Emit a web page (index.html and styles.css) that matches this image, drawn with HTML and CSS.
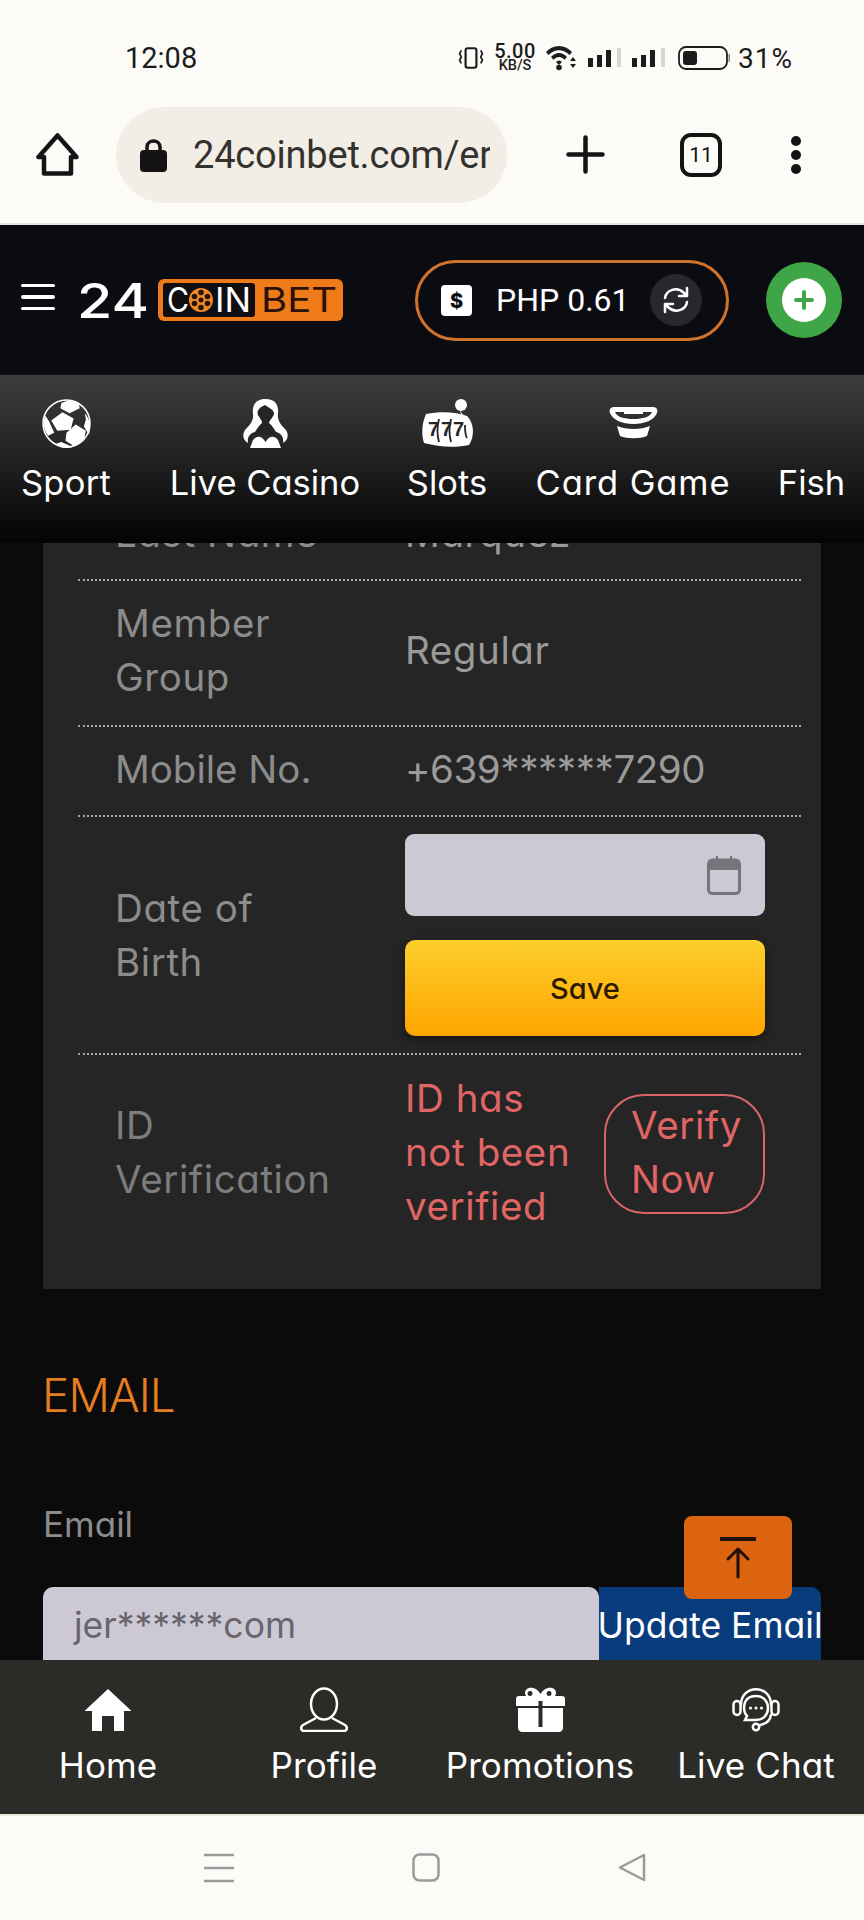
FILE: index.html
```html
<!DOCTYPE html>
<html lang="en">
<head>
<meta charset="utf-8">
<title>24 Coin Bet</title>
<link rel="stylesheet" href="styles.css">
</head>
<body>
<div class="phone">
  <div class="status">
    <span class="time">12:08</span>
    <div class="status-icons">
      <svg width="26" height="22" viewBox="0 0 24 20" fill="none" stroke="#1c1c1c" stroke-width="2"><rect x="7" y="1" width="10" height="18" rx="2"/><path d="M3 3 L1.500 6 L3 9 L1.500 12 L3 15 M21 3 L22.500 6 L21 9 L22.500 12 L21 15" stroke-width="1.600"/></svg>
      <div class="speed"><span class="speed-num">5.00</span><span class="speed-unit">KB/S</span></div>
      <svg width="31" height="26" viewBox="0 0 31 26" fill="#1c1c1c"><path d="M0 7 C7 -1 19 -1 26 7 L23.500 10 C17.500 3.500 8.500 3.500 2.500 10Z"/><path d="M5 12 C10 6.500 16 6.500 21 12 L18.500 14.800 C15 11 11 11 7.500 14.800Z"/><path d="M10 17 C12 15 14 15 16 17 L13 20Z"/><circle cx="13" cy="22.500" r="2.800"/><path d="M27 12 L30 16 H24Z M27 23 L30 19 H24Z"/></svg>
      <svg class="sig" width="38" height="20" viewBox="0 0 38 20"><path fill="#1c1c1c" d="M3 10 h5 v9 h-5z M12 7 h5 v12 h-5z M21 2 h5 v17 h-5z"/><path fill="#d6d6d4" d="M32 0 h4 v19 h-4z"/></svg>
      <svg class="sig" width="36" height="20" viewBox="0 0 36 20"><path fill="#1c1c1c" d="M1 10 h5 v9 h-5z M10 7 h5 v12 h-5z M19 2 h5 v17 h-5z"/><path fill="#d6d6d4" d="M30 0 h4 v19 h-4z"/></svg>
      <svg width="55" height="24" viewBox="0 0 55 24" fill="none"><rect x="4" y="1" width="48" height="22" rx="7" stroke="#1c1c1c" stroke-width="1.800"/><rect x="8" y="5" width="14" height="14" rx="3" fill="#1c1c1c"/><rect x="53.500" y="8" width="1.500" height="8" fill="#888"/></svg>
      <span class="batt-text">31%</span>
    </div>
  </div>

  <div class="toolbar">
    <svg class="tb-home" width="43" height="43" viewBox="0 0 43 43" fill="none" stroke="#141414" stroke-width="4.500" stroke-linejoin="round"><path d="M21.500 2.500 L2.500 24 H8 V40.500 H35 V24 H40.500Z"/></svg>
    <div class="url-pill">
      <svg width="27" height="34" viewBox="0 0 27 34"><path fill="none" stroke="#141414" stroke-width="3.500" d="M7 15 V9 C7 1 20 1 20 9 V15"/><rect x="0" y="12" width="27" height="22" rx="4" fill="#141414"/></svg>
      <span class="url-text">24coinbet.com/er</span>
    </div>
    <svg class="tb-plus" width="39" height="39" viewBox="0 0 39 39" stroke="#141414" stroke-width="4.500" stroke-linecap="round"><path d="M19.500 2.500 V36.500 M2.500 19.500 H36.500"/></svg>
    <div class="tabs">11</div>
    <div class="dots"><i></i><i></i><i></i></div>
  </div>

  <header class="site-head">
    <div class="burger"><i></i><i></i><i></i></div>
    <svg class="logo" width="266" height="42" viewBox="0 0 266 42" role="img" aria-label="24 Coin Bet">
      <g transform="translate(2 0)">
      <text class="logo-24" x="-2" y="39" textLength="72" lengthAdjust="spacingAndGlyphs">24</text>
      <rect x="79" y="0" width="185" height="42" rx="6" fill="#ef7a1a"/>
      <rect x="84" y="4" width="92" height="34" rx="3" fill="#0e0d10"/>
      <text class="logo-w" x="88" y="33" textLength="22" lengthAdjust="spacingAndGlyphs">C</text>
      <circle cx="122" cy="21" r="12" fill="#ef8a24"/>
      <g fill="#2a1208"><circle cx="122" cy="21" r="2.500"/><circle cx="122" cy="13.500" r="2.800"/><circle cx="122" cy="28.500" r="2.800"/><circle cx="115.500" cy="17.500" r="2.800"/><circle cx="128.500" cy="17.500" r="2.800"/><circle cx="115.500" cy="24.500" r="2.800"/><circle cx="128.500" cy="24.500" r="2.800"/></g>
      <text class="logo-w" x="136" y="33" textLength="36" lengthAdjust="spacingAndGlyphs">IN</text>
      <text class="logo-k" x="182" y="33" textLength="76" lengthAdjust="spacingAndGlyphs">BET</text>
      </g>
    </svg>
    <div class="balance">
      <svg width="31" height="31" viewBox="0 0 31 31"><rect width="31" height="31" rx="4" fill="#fff"/><text class="dollar" x="15.500" y="23" text-anchor="middle">$</text></svg>
      <span class="balance-text">PHP 0.61</span>
      <div class="refresh">
        <svg width="30" height="30" viewBox="0 0 30 30" fill="none" stroke="#fff" stroke-width="2.500" stroke-linecap="round" stroke-linejoin="round"><path d="M4 13 C5 5 16 1 23 8 L26 11 M26 3 V11 H18"/><path d="M26 17 C25 25 14 29 7 22 L4 19 M4 27 V19 H12"/></svg>
      </div>
    </div>
    <div class="add"><span class="add-in">
      <svg width="22" height="22" viewBox="0 0 22 22" stroke="#3fa648" stroke-width="4" stroke-linecap="round"><path d="M11 3 V19 M3 11 H19"/></svg>
    </span></div>
  </header>

  <nav class="cats">
    <a class="cat cat-first">
      <svg class="cat-icon" width="49" height="49" viewBox="0 0 48 48" fill="#fff"><circle cx="24" cy="24" r="23" fill="none" stroke="#fff" stroke-width="1.500"/><path d="M19 4 L27 1 L36 4 L37 9 L27 14 L18 9Z"/><path d="M20 13 L31 19 L28 30 L15 31 L9 21Z"/><path d="M33 25 L43 31 L41 41 L31 46 L23 41 L24 33Z"/><path d="M3 16 L7 22 L12 33 L6 36 C1 30 1 22 3 16Z"/><path d="M42 14 C47 20 48 27 46 35 L41 27 L43 20Z"/><path d="M13 44 L19 42 L30 47 C24 49 18 48 13 44Z"/></svg>
      <span>Sport</span>
    </a>
    <a class="cat cat-live">
      <svg class="cat-icon" width="45" height="49" viewBox="0 0 45 49" fill="#fff"><path d="M22.500 0 C12 0 9 7 10 15 C11 22 6 27 2 31 C-1 36 0 41 5 44 C4 38 7 34 12 33 L33 33 C38 34 41 38 40 44 C45 41 46 36 43 31 C39 27 34 22 35 15 C36 7 33 0 22.500 0Z"/><path fill="#252525" d="M22 6 C17 8 13 12 15 16 C17 20 19 21 19 24 C15 27 13 32 10 36 L35 36 C32 32 30 27 26 24 C27 20 31 18 31 14 C30 10 26 9 22 6Z"/><path d="M7 49 L10 41 C14 36 19 37 22.500 43 C26 37 31 36 35 41 L38 49Z"/></svg>
      <span>Live Casino</span>
    </a>
    <a class="cat cat-slots">
      <svg class="cat-icon" width="53" height="49" viewBox="0 0 53 49"><circle cx="40" cy="6" r="6" fill="#fff"/><path d="M38 10 L46 22 L43 22Z" fill="#fff"/><path d="M5 15 C20 12 36 13 46 17 C53 24 54 37 48 46 C34 49 18 48 3 44 C0 35 1 24 5 15Z" fill="#fff"/><text class="seven" x="7" y="37">7</text><text class="seven" x="20" y="37">7</text><text class="seven" x="32" y="37">7</text><path d="M18 20 C16 28 16 36 18 43 M30 20 C28 28 28 36 30 43 M44 26 C44 32 44 36 46 39" fill="none" stroke="#252525" stroke-width="1.800"/></svg>
      <span>Slots</span>
    </a>
    <a class="cat cat-card">
      <svg class="cat-icon" width="49" height="49" viewBox="0 0 49 49" fill="#fff"><path fill-rule="evenodd" d="M5 8 H44 C48 8 49 11 48 14 C45 21 36 25 24.500 25 C13 25 4 21 1 14 C0 11 1 8 5 8Z M6 13 C8 18 15 20 24.500 20 C34 20 41 18 43 13 H34 V15 H15 V13Z"/><path d="M8 27 C18 31 31 31 41 27 L38 37 C31 40 18 40 11 37Z"/></svg>
      <span>Card Game</span>
    </a>
    <a class="cat cat-fish"><span>Fish</span></a>
  </nav>

  <main class="content">
    <section class="card">
      <div class="row"><div class="label">Last Name</div><div class="value">Marquez</div></div>
      <div class="row row-tall"><div class="label">Member<br>Group</div><div class="value">Regular</div></div>
      <div class="row"><div class="label label-mobile">Mobile No.</div><div class="value value-num">+639******7290</div></div>
      <div class="row row-dob">
        <div class="label">Date of<br>Birth</div>
        <div class="value dob">
          <div class="date-field">
            <svg width="34" height="39" viewBox="0 0 34 39"><path fill="#6f6c74" d="M9 0 h2 v5 h-2z M23 0 h2 v5 h-2z"/><rect x="1.500" y="4" width="31" height="33.500" rx="4" fill="none" stroke="#77747c" stroke-width="3"/><path fill="#77747c" d="M2 5 h30 v9 h-30z"/></svg>
          </div>
          <button class="save">Save</button>
        </div>
      </div>
      <div class="row row-last">
        <div class="label label-dim">ID<br>Verification</div>
        <div class="value verify">
          <div class="verify-text">ID has<br>not been<br>verified</div>
          <div class="verify-btn">Verify<br>Now</div>
        </div>
      </div>
    </section>

    <h2 class="section-title">EMAIL</h2>
    <div class="field-label">Email</div>
    <div class="email-row">
      <div class="email-input">jer******com</div>
      <div class="email-btn">Update Email</div>
    </div>

    <button class="to-top" aria-label="Back to top">
      <svg width="36" height="42" viewBox="0 0 36 42" fill="none" stroke="#1e1208" stroke-linecap="round" stroke-linejoin="round"><path d="M1 2 H35" stroke-width="4"/><path d="M18 40 V12 M8 22 L18 12 L28 22" stroke-width="3"/></svg>
    </button>
  </main>

  <nav class="tabbar">
    <a class="tab">
      <svg width="48" height="45" viewBox="0 0 48 45" fill="#fff"><path d="M24 2 L47.500 24 H40 V44 H30 V29 H18 V44 H8 V24 H0.500Z"/></svg>
      <span>Home</span>
    </a>
    <a class="tab">
      <svg width="48" height="45" viewBox="0 0 48 45" fill="none" stroke="#fff" stroke-width="2.500" stroke-linejoin="round"><ellipse cx="24" cy="17" rx="13" ry="15.500"/><path d="M16 31 L3 38 C0 40 1 44 4 44 H44 C47 44 48 40 45 38 L32 31"/></svg>
      <span>Profile</span>
    </a>
    <a class="tab">
      <svg width="49" height="45" viewBox="0 0 49 45" fill="#fff"><path fill-rule="evenodd" d="M13 1 C18 0 22 3 24.500 7 C27 3 31 0 36 1 C40 2 41 6 39 9 H10 C8 6 9 2 13 1Z M14 4 a2.500 2.500 0 1 0 .1 0Z M33 4 a2.500 2.500 0 1 0 .1 0Z"/><path d="M3 9 H46 C48 9 49 10 49 12 V19 H0 V12 C0 10 1 9 3 9Z"/><path d="M2 21 H47 V41 C47 43 45 45 43 45 H6 C4 45 2 43 2 41Z"/><path fill="#2b2b27" d="M22.500 14 h4 v26 h-4z"/></svg>
      <span>Promotions</span>
    </a>
    <a class="tab">
      <svg width="48" height="45" viewBox="0 0 48 45" fill="none" stroke="#fff" stroke-width="2.500" stroke-linecap="round"><path d="M9 18 C9 -3 39 -3 39 18"/><rect x="1.500" y="14" width="7" height="14" rx="3.500"/><rect x="39.500" y="14" width="7" height="14" rx="3.500"/><path d="M24 9 C15 9 12 15 12 20 C12 24 13 27 15 29 L13 33 H24 C32 33 36 27 36 21 C36 15 32 9 24 9Z"/><path d="M39 28 C38 34 34 37 28 38"/><circle cx="24" cy="40" r="3.200"/><g fill="#fff" stroke="none"><circle cx="18.500" cy="21" r="1.500"/><circle cx="24" cy="21" r="1.500"/><circle cx="29.500" cy="21" r="1.500"/></g></svg>
      <span>Live Chat</span>
    </a>
  </nav>

  <div class="android-nav">
    <svg width="30" height="30" viewBox="0 0 30 30" stroke="#9b9b9b" stroke-width="2.500"><path d="M0 2 H30 M0 15 H30 M0 28 H30"/></svg>
    <svg width="28" height="29" viewBox="0 0 28 29" fill="none" stroke="#9b9b9b" stroke-width="2.500"><rect x="1.500" y="1.500" width="25" height="26" rx="6"/></svg>
    <svg width="28" height="29" viewBox="0 0 28 29" fill="none" stroke="#9b9b9b" stroke-width="2.500" stroke-linejoin="round"><path d="M26 2 V27 L2 14.500Z"/></svg>
  </div>
</div>
</body>
</html>
```
FILE: styles.css
```css
* { box-sizing: border-box; }
html, body { margin: 0; padding: 0; background: #0b0b0b; }
svg { display: block; flex: none; }

.phone {
  width: 864px;
  height: 1920px;
  display: flex;
  flex-direction: column;
  overflow: hidden;
  font-family: Inter, "Liberation Sans", sans-serif;
  font-feature-settings: "cv11" 1;
}

/* Android status bar */
.status {
  height: 90px;
  padding: 26px 71px 0 125px;
  background: #fdfbf8;
  display: flex;
  align-items: center;
  justify-content: space-between;
  font-family: Roboto, sans-serif;
  color: #1c1c1c;
}
.time { font-size: 29px; }
.status-icons { display: flex; align-items: center; gap: 8px; }
.speed { width: 46px; display: flex; flex-direction: column; align-items: center; }
.speed-num { font-size: 20px; font-weight: 500; letter-spacing: .5px; line-height: 15px; }
.speed-unit { font-size: 14.500px; font-weight: 500; line-height: 14px; }
.batt-text { font-size: 28px; letter-spacing: 1px; }

/* Browser toolbar */
.toolbar {
  height: 135px;
  padding: 0 0 4px 36px;
  background: #fdfbf8;
  border-bottom: 2px solid #e6e3dc;
  display: flex;
  align-items: center;
}
.url-pill {
  width: 391px;
  height: 96px;
  margin-left: 37px;
  padding-left: 24px;
  border-radius: 48px;
  background: #f2eee6;
  display: flex;
  align-items: center;
  gap: 26px;
}
.url-text {
  width: 297px;
  overflow: hidden;
  white-space: nowrap;
  font-family: Roboto, sans-serif;
  font-size: 38px;
  letter-spacing: -.2px;
  color: #34322f;
}
.tb-plus { margin-left: 59px; }
.tabs {
  width: 42px;
  height: 44px;
  margin-left: 75px;
  border: 4.500px solid #141414;
  border-radius: 11px;
  display: flex;
  align-items: center;
  justify-content: center;
  font-family: Roboto, sans-serif;
  font-size: 21px;
  color: #141414;
}
.dots { margin-left: 69px; display: flex; flex-direction: column; gap: 4px; }
.dots i { width: 10px; height: 10px; border-radius: 50%; background: #141414; }

/* Site header */
.site-head {
  height: 150px;
  padding-left: 21px;
  background: #0b0c12;
  display: flex;
  align-items: center;
}
.burger { width: 34px; display: flex; flex-direction: column; gap: 8px; margin-right: 22px; margin-top: -6px; }
.burger i { height: 3.500px; border-radius: 2px; background: #fff; }
.logo { margin-right: 72px; }
.logo-24 { font-family: Inter, sans-serif; font-weight: 500; font-size: 48px; fill: #fff; }
.logo-w { font-family: Inter, sans-serif; font-size: 34px; fill: #fff; }
.logo-k { font-family: Inter, sans-serif; font-size: 34px; fill: #2a1208; }
.dollar { font-family: Inter, sans-serif; font-size: 20px; font-weight: 800; fill: #0b0c12; }
.seven { font-family: "Liberation Sans", sans-serif; font-size: 20px; font-weight: 700; fill: #252525; }
.balance {
  width: 314px;
  height: 81px;
  padding-left: 23px;
  border: 3px solid #d0722c;
  border-radius: 41px;
  display: flex;
  align-items: center;
  color: #fff;
}
.balance-text { margin-left: 24px; font-family: Roboto, sans-serif; font-size: 32px; white-space: nowrap; width: 154px; }
.refresh {
  width: 52px;
  height: 52px;
  border-radius: 50%;
  background: #26282e;
  display: flex;
  align-items: center;
  justify-content: center;
}
.add {
  width: 76px;
  height: 76px;
  margin-left: 37px;
  border-radius: 50%;
  background: #3fa648;
  display: flex;
  align-items: center;
  justify-content: center;
}
.add-in {
  width: 44px;
  height: 44px;
  border-radius: 50%;
  background: #fff;
  display: flex;
  align-items: center;
  justify-content: center;
}

/* Category nav */
.cats {
  height: 168px;
  padding: 24px 0 0 22px;
  background: linear-gradient(#3e3e3e, #040404);
  display: flex;
  gap: 49px;
  align-items: flex-start;
  color: #fff;
  font-size: 34.500px;
  letter-spacing: .3px;
}
.cat { width: 88px; display: flex; flex-direction: column; align-items: center; white-space: nowrap; }
.cat-live { width: 188px; letter-spacing: 0; }
.cat-slots { width: 78px; letter-spacing: 0; }
.cat-card { width: 196px; letter-spacing: .9px; }
.cat-fish { width: 63px; padding-top: 63px; letter-spacing: 0; }
.cat-first { margin-right: 12px; }
.cat-icon { margin-bottom: 14px; }

/* Page content */
.content {
  position: relative;
  flex: 1;
  min-height: 0;
  overflow: hidden;
  padding: 0 43px;
  background: #0b0b0b;
  font-size: 35.500px;
  line-height: 54px;
}
.card {
  margin-top: -52px;
  padding: 0 20px 36px 35px;
  background: #252525;
  color: #8c8c8c;
  font-size: 38.500px;
  letter-spacing: .6px;
}
.row {
  display: flex;
  align-items: center;
  padding: 15px 0 19px;
  border-bottom: 2px dotted #a8a8a8;
}
.row-tall { padding-bottom: 21px; }
.row-dob { padding: 17px 0; }
.row-last { padding: 16px 0 20px; border-bottom: 0; }
.label { width: 327px; padding-left: 37px; flex: none; }
.label-dim { color: #7d7d7d; }
.label-mobile { letter-spacing: 0; }
.value { flex: 1; min-width: 0; padding-right: 36px; color: #9a9a9a; }
.value-num { letter-spacing: -.43px; }
.dob { display: flex; flex-direction: column; gap: 24px; }
.date-field {
  height: 82px;
  padding-right: 24px;
  border-radius: 9px;
  background: #cdc9d4;
  display: flex;
  align-items: center;
  justify-content: flex-end;
}
.save {
  height: 96px;
  border: 0;
  border-radius: 10px;
  background: linear-gradient(#fdcf2c, #ffa500);
  box-shadow: 0 3px 8px rgba(0, 0, 0, .45);
  font-family: inherit;
  font-feature-settings: inherit;
  font-size: 29px;
  font-weight: 500;
  letter-spacing: 0;
  color: #2a1a00;
}
.verify { display: flex; align-items: center; justify-content: space-between; color: #e06666; }
.verify-btn {
  width: 161px;
  margin-top: 4px;
  padding: 2px 0 6px 25px;
  border: 2px solid #d9656b;
  border-radius: 40px;
}

.section-title {
  margin: 76px 0 0 -1px;
  font-size: 46px;
  font-weight: 300;
  letter-spacing: -1px;
  line-height: 60px;
  color: #e67e22;
}
.field-label { margin: 75px 0 0; font-size: 35px; line-height: 48px; color: #8c8c8c; }
.email-row { margin-top: 39px; display: flex; height: 100px; }
.email-input {
  flex: none;
  width: 556px;
  padding: 12px 0 0 31px;
  border-radius: 10px 10px 0 0;
  background: #cdc9d4;
  color: #68646c;
}
.email-btn {
  flex: 1;
  min-width: 0;
  padding-top: 12px;
  border-radius: 0 10px 0 0;
  background: #083c7c;
  color: #fff;
  display: flex;
  justify-content: center;
  white-space: nowrap;
}
.to-top {
  position: absolute;
  left: 684px;
  top: 973px;
  width: 108px;
  height: 83px;
  padding: 0;
  border: 0;
  border-radius: 8px;
  background: #dc6410;
  display: flex;
  align-items: center;
  justify-content: center;
}

/* Bottom tab bar */
.tabbar {
  height: 154px;
  padding-top: 27px;
  background: #2b2b27;
  display: grid;
  grid-template-columns: repeat(4, 216px);
  color: #fff;
  font-size: 35px;
  letter-spacing: .1px;
}
.tab { display: flex; flex-direction: column; align-items: center; gap: 12px; white-space: nowrap; }

/* Android navigation */
.android-nav {
  height: 106px;
  padding: 37px 0 0 204px;
  background: #fdfbf8;
  border-top: 2px solid #ece9dd;
  display: flex;
  align-items: flex-start;
  gap: 178px;
}
```
